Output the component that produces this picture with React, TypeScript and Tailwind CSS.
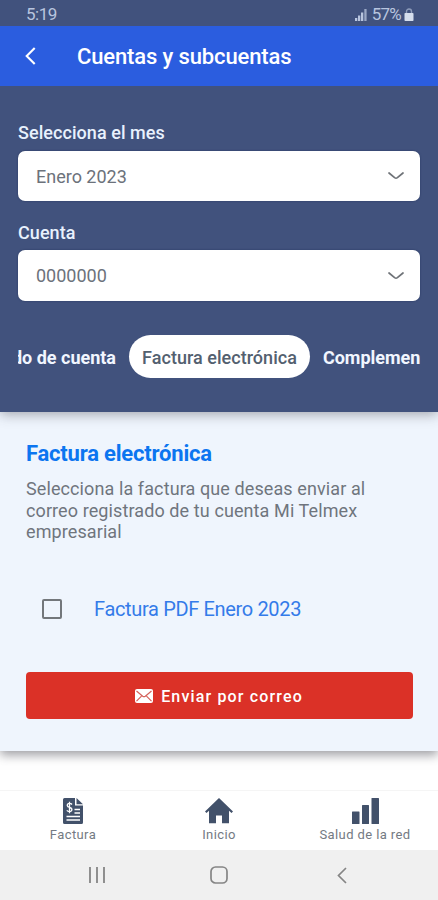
import type { ReactNode } from 'react';

function Chevron() {
  return (
    <svg viewBox="0 0 16 8" fill="none" stroke="#6f7378" strokeWidth={1.7} className="h-2 w-4">
      <path strokeLinecap="round" strokeLinejoin="round" d="M1 1l5.6 4.7q1.4 1.1 2.8 0L15 1" />
    </svg>
  );
}

function SelectField({ label, value }: { label: string; value: string }) {
  return (
    <div>
      <div className="h-[18px] whitespace-nowrap text-[18px] leading-[18px] font-medium tracking-[0.06px] text-[#e8f1fd]">
        {label}
      </div>
      <button className="mt-[8.5px] flex h-[50.5px] w-full items-center justify-between rounded-[7px] bg-white pt-px pr-[16px] pl-[18px] shadow-[0_0_2px_#26365f]">
        <span className="text-[18px] text-[#6c727b]">{value}</span>
        <Chevron />
      </button>
    </div>
  );
}

function NavItem({ label, children }: { label: string; children: ReactNode }) {
  return (
    <div className="flex flex-1 flex-col items-center pt-[7px]">
      <div className="flex h-[26px] items-end">{children}</div>
      <span className="mt-[3px] whitespace-nowrap text-[13px] leading-[15px] tracking-[0.4px] text-[#747a83]">
        {label}
      </span>
    </div>
  );
}

export default function App() {
  return (
    <div className="flex h-[900px] w-[438px] flex-col overflow-hidden bg-white font-['Roboto',sans-serif]">
      {/* Status bar */}
      <div className="flex h-[26px] shrink-0 items-center justify-between bg-[#41527d] pt-[3px] pr-[24px] pl-[26px] text-[17px] text-[#b8c5df]">
        <span className="tracking-[-0.5px]">5:19</span>
        <div className="flex items-center">
          <svg viewBox="0 0 12 12" className="mr-[5px] h-3 w-3" fill="#b8c5df">
            <path d="M0 9h2.300v3H0z" />
            <path d="M3 6.500h2.300V12H3z" />
            <path d="M6 3.500h2.300V12H6z" />
            <path d="M9.300 0h2.300v12H9.300z" opacity=".75" />
          </svg>
          <span className="tracking-[-0.8px]">57%</span>
          <svg viewBox="0 0 10 14" className="ml-[3px] h-[14px] w-[10px]">
            <path d="M2.500 6V3.500a2.500 2.500 0 015 0V6" fill="none" stroke="#8d9bb9" strokeWidth={1.4} />
            <rect x="0.500" y="5" width="9" height="8" rx="0.800" fill="#d5deed" />
          </svg>
        </div>
      </div>

      {/* Header */}
      <header className="relative z-20 flex h-[60px] shrink-0 items-center bg-[#2b5ddf] pl-[25px]">
        <svg viewBox="0 0 11 18" fill="none" stroke="#fff" strokeWidth={2.1} className="h-[18px] w-[11px]">
          <path d="M9.700 1L1.700 9l8 8" />
        </svg>
        <h1 className="ml-[41px] whitespace-nowrap pt-px text-[22px] font-medium tracking-[-0.13px] text-white">
          Cuentas y subcuentas
        </h1>
      </header>

      {/* Filters */}
      <section className="relative z-10 flex h-[326px] shrink-0 flex-col bg-[#41527d] px-[18px] pt-[38px] shadow-[0_2px_12px_rgba(60,60,70,0.45)]">
        <SelectField label="Selecciona el mes" value="Enero 2023" />
        <div className="mt-[22.5px]">
          <SelectField label="Cuenta" value="0000000" />
        </div>
        <div className="mt-[34.5px] flex w-[403px] items-center justify-center overflow-hidden">
          <div className="flex shrink-0 items-center whitespace-nowrap text-[18px] font-bold text-[#f1f6ff]">
            <span className="flex w-[98px] justify-end pt-px">Estado de cuenta</span>
            <span className="mx-[13px] flex h-[43px] w-[181px] items-center justify-center rounded-full bg-white pt-px font-medium tracking-[0.03px] text-[#53606f]">
              Factura electrónica
            </span>
            <span className="w-[98px] pt-px tracking-[-0.04px]">Complemen</span>
          </div>
        </div>
      </section>

      {/* Invoice */}
      <section className="h-[339px] shrink-0 bg-[#eff5fd] px-[26px] pt-[29px] shadow-[0_4px_10px_rgba(60,60,70,0.5)]">
        <h2 className="text-[22px] leading-[26px] font-bold tracking-[-0.2px] whitespace-nowrap text-[#0c75f0]">
          Factura electrónica
        </h2>
        <p className="mt-[11px] whitespace-nowrap text-[18px] leading-[21.5px] tracking-[0.1px] text-[#6f757d]">
          Selecciona la factura que deseas enviar al
          <br />
          correo registrado de tu cuenta Mi Telmex
          <br />
          empresarial
        </p>
        <div className="mt-[54.5px] flex h-[24px] items-center pl-[16px]">
          <span className="h-[20px] w-[20px] rounded-[2px] border-2 border-[#73777b]" />
          <span className="ml-[32px] whitespace-nowrap text-[20px] tracking-[-0.34px] text-[#347be9]">
            Factura PDF Enero 2023
          </span>
        </div>
        <button className="mt-[51px] flex h-[47px] w-[387px] items-center justify-center rounded-[4px] bg-[#db3127] text-white">
          <svg viewBox="0 0 18 14" className="h-[14px] w-[18px]">
            <rect width="18" height="14" rx="2" fill="#fff" />
            <path
              d="M1.500 2l6.200 5.200q1.300 1 2.600 0L16.500 2M1.500 12.200l5-5.100M16.500 12.200l-5-5.100"
              fill="none"
              stroke="#d5625b"
              strokeWidth={1.2}
            />
          </svg>
          <span className="mr-px ml-[8px] whitespace-nowrap pt-[2px] text-[16px] font-medium tracking-[1.15px]">
            Enviar por correo
          </span>
        </button>
      </section>

      <div className="h-[39px] shrink-0" />

      {/* Tab bar */}
      <nav className="flex h-[60px] shrink-0 border-t border-[#f5f5f5] bg-white">
        <NavItem label="Factura">
          <svg viewBox="0 0 20 26" className="h-[26px] w-5">
            <path d="M0 1.500Q0 0 1.500 0H12v7.500h8v17q0 1.500-1.500 1.500h-17Q0 26 0 24.500z" fill="#42516a" />
            <path d="M13.500 0L20 6.200H13.500z" fill="#42516a" />
            <path
              d="M9 6.500Q8 5.200 6.300 5.400Q4 5.700 4.300 7.700Q4.500 9 6.500 9.400Q9 10 8.900 11.700Q8.700 13.600 6.500 13.600Q4.700 13.600 3.800 12.400M6.500 3.800v11.500"
              fill="none"
              stroke="#fff"
              strokeWidth={1.3}
            />
            <path d="M11.500 11.500H17M11.500 15H17M3.500 18.500H17M3.500 22H17" stroke="#fff" strokeWidth={1.3} />
          </svg>
        </NavItem>
        <NavItem label="Inicio">
          <svg viewBox="0 0 28 26" className="h-[26px] w-7" fill="#42516a">
            <path d="M14 0L28 13.500L26.500 15L24 12.800V25.200H17V17.500H11V25.200H4V12.800L1.500 15L0 13.500z" />
          </svg>
        </NavItem>
        <NavItem label="Salud de la red">
          <svg viewBox="0 0 27 26" className="h-[26px] w-[27px]" fill="#42516a">
            <rect x="0" y="13.500" width="7.500" height="12.500" rx=".5" />
            <rect x="10" y="7" width="7" height="19" rx=".5" />
            <rect x="19.500" y="0" width="7.500" height="26" rx=".5" />
          </svg>
        </NavItem>
      </nav>

      {/* System buttons */}
      <div className="flex h-[50px] shrink-0 items-center bg-[#f0f0f0] pl-[89px]">
        <svg viewBox="0 0 16 16" className="h-4 w-4" stroke="#858585" strokeWidth={1.8}>
          <path d="M1 0v16M8 0v16M15 0v16" />
        </svg>
        <svg viewBox="0 0 18 18" className="ml-[105px] h-[18px] w-[18px]" fill="none" stroke="#858585" strokeWidth={1.7}>
          <rect x="1" y="1" width="16" height="16" rx="4.500" />
        </svg>
        <svg viewBox="0 0 10 17" className="ml-[109px] h-[17px] w-[10px]" fill="none" stroke="#858585" strokeWidth={1.7}>
          <path d="M9 1L1.500 8.500L9 16" />
        </svg>
      </div>
    </div>
  );
}
